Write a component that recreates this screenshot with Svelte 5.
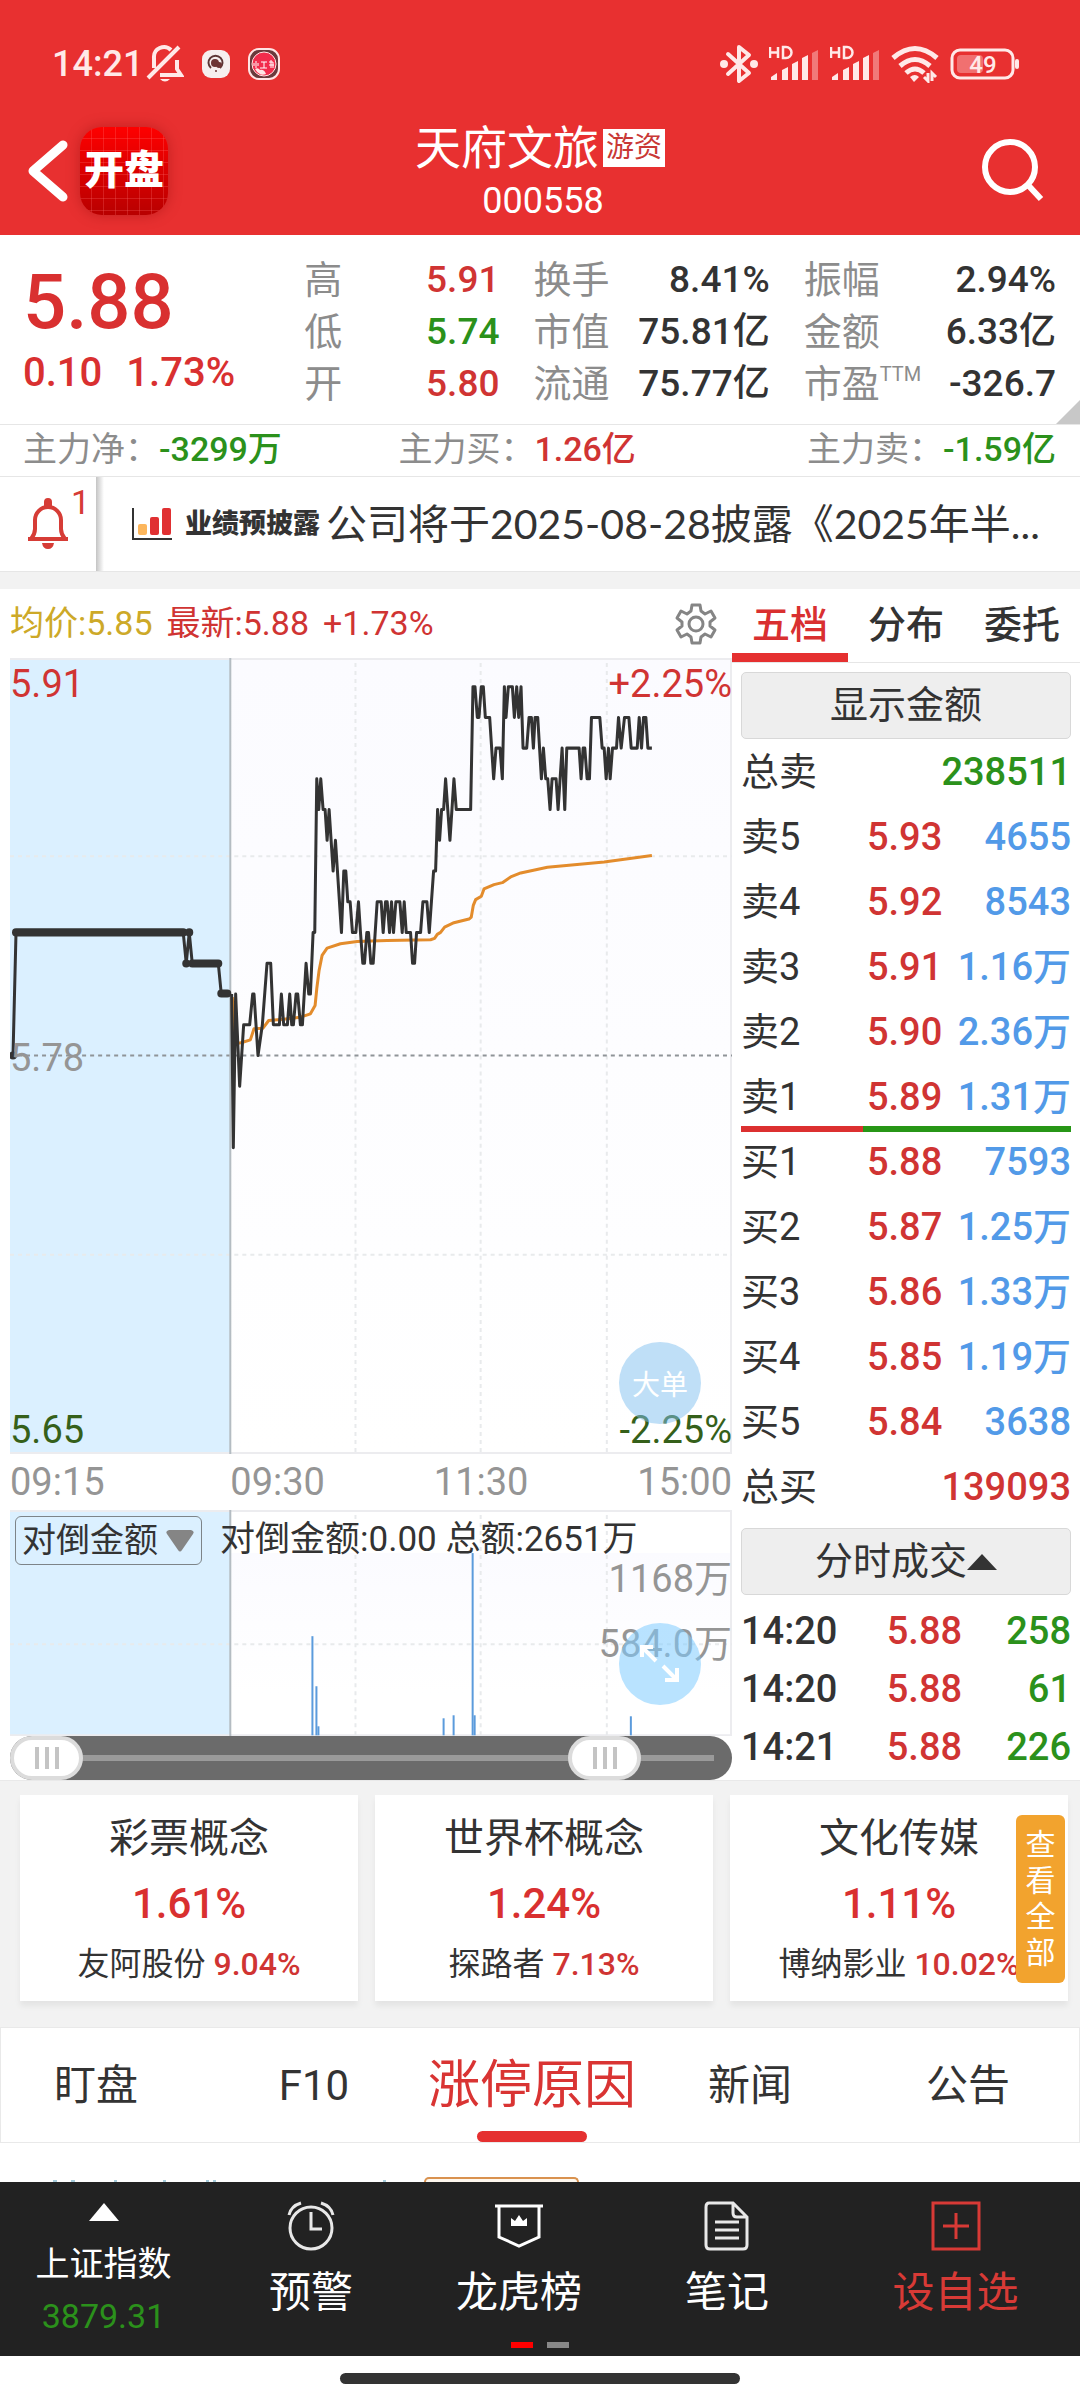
<script lang="ts">
  type Tone = "up" | "down" | "plain";

  const stats: { label: string; sup?: string; value: string; tone: Tone }[][] = [
    [
      { label: "高", value: "5.91", tone: "up" },
      { label: "低", value: "5.74", tone: "down" },
      { label: "开", value: "5.80", tone: "up" },
    ],
    [
      { label: "换手", value: "8.41%", tone: "plain" },
      { label: "市值", value: "75.81亿", tone: "plain" },
      { label: "流通", value: "75.77亿", tone: "plain" },
    ],
    [
      { label: "振幅", value: "2.94%", tone: "plain" },
      { label: "金额", value: "6.33亿", tone: "plain" },
      { label: "市盈", sup: "TTM", value: "-326.7", tone: "plain" },
    ],
  ];

  const funds: { label: string; value: string; tone: Tone }[] = [
    { label: "主力净：", value: "-3299万", tone: "down" },
    { label: "主力买：", value: "1.26亿", tone: "up" },
    { label: "主力卖：", value: "-1.59亿", tone: "down" },
  ];

  const totalSell = 238511;
  const totalBuy = 139093;
  const buyShare = (totalBuy / (totalBuy + totalSell)) * 100;

  const sells = [
    ["卖5", "5.93", "4655"],
    ["卖4", "5.92", "8543"],
    ["卖3", "5.91", "1.16万"],
    ["卖2", "5.90", "2.36万"],
    ["卖1", "5.89", "1.31万"],
  ];
  const buys = [
    ["买1", "5.88", "7593"],
    ["买2", "5.87", "1.25万"],
    ["买3", "5.86", "1.33万"],
    ["买4", "5.85", "1.19万"],
    ["买5", "5.84", "3638"],
  ];
  const ticks = [
    ["14:20", "5.88", "258"],
    ["14:20", "5.88", "61"],
    ["14:21", "5.88", "226"],
  ];

  const sectors = [
    { name: "彩票概念", change: "1.61%", stock: "友阿股份", stockChange: "9.04%" },
    { name: "世界杯概念", change: "1.24%", stock: "探路者", stockChange: "7.13%" },
    { name: "文化传媒", change: "1.11%", stock: "博纳影业", stockChange: "10.02%" },
  ];

  const bookTabs = ["五档", "分布", "委托"];
  const infoTabs = ["盯盘", "F10", "涨停原因", "新闻", "公告"];
  let bookTab = $state("五档");
  let infoTab = $state("涨停原因");
  let rangeStart = $state(0);
  let rangeEnd = $state(86);

  // call auction, [x, price in cents]
  const auction = [
    [3, 578], [6, 582], [173, 582], [176, 581], [179, 582], [182, 581],
    [208, 581], [211, 580], [217, 580],
  ];

  // continuous trading, [thirds of a pixel right of x = 210, price in cents]
  const trades = [
    [34, 580], [39, 575], [46, 580], [58, 577], [70, 579], [88, 579], [97, 580], [101, 580],
    [113, 578], [126, 579], [140, 581], [151, 581], [159, 579], [177, 579], [183, 580], [190, 579],
    [201, 579], [208, 580], [214, 579], [219, 579], [227, 580], [232, 580], [240, 579], [246, 579],
    [257, 581], [265, 580], [270, 580], [278, 582], [283, 582], [289, 587], [295, 586], [301, 587],
    [308, 586], [314, 586], [320, 585], [326, 586], [332, 585], [338, 584], [345, 585], [351, 584],
    [363, 582], [370, 584], [376, 584], [382, 583], [389, 583], [396, 582], [406, 582], [414, 583],
    [420, 582], [427, 581], [432, 581], [439, 582], [444, 582], [451, 581], [458, 581], [470, 583],
    [482, 583], [488, 582], [495, 583], [500, 583], [507, 582], [513, 583], [519, 582], [526, 583],
    [538, 583], [545, 582], [551, 583], [557, 582], [570, 582], [576, 581], [582, 581], [588, 582],
    [600, 582], [607, 583], [619, 583], [626, 582], [639, 584], [645, 584], [651, 586], [657, 585],
    [663, 586], [669, 586], [675, 587], [688, 585], [700, 587], [707, 586], [750, 586], [757, 590],
    [763, 590], [770, 589], [775, 589], [782, 590], [788, 590], [794, 589], [807, 589], [819, 587],
    [826, 588], [838, 588], [845, 587], [851, 590], [856, 589], [863, 590], [875, 590], [881, 589],
    [888, 590], [894, 589], [901, 590], [907, 588], [918, 588], [925, 589], [932, 589], [938, 588],
    [943, 589], [951, 589], [962, 587], [968, 588], [975, 587], [981, 587], [988, 586], [994, 587],
    [1006, 587], [1012, 586], [1024, 588], [1032, 586], [1038, 588], [1075, 588], [1081, 587],
    [1087, 588], [1092, 588], [1099, 587], [1106, 587], [1112, 589], [1137, 589], [1144, 588],
    [1150, 588], [1156, 587], [1163, 588], [1168, 587], [1175, 588], [1187, 588], [1193, 589],
    [1201, 588], [1211, 589], [1224, 589], [1231, 588], [1249, 588], [1255, 589], [1262, 588],
    [1268, 589], [1275, 589], [1281, 588], [1293, 588],
  ];

  const average = [
    [36, 1010], [44, 1150], [65, 1146], [90, 1138], [101, 1105], [128, 1103], [145, 1080],
    [190, 1076], [240, 1070], [270, 1060], [284, 1035], [289, 985], [296, 930], [305, 885],
    [320, 863], [360, 850], [410, 843], [500, 840], [630, 838], [642, 834], [650, 822], [660, 816],
    [672, 800], [700, 787], [745, 776], [752, 770], [758, 735], [765, 718], [782, 708], [790, 686],
    [820, 673], [845, 667], [870, 650], [900, 638], [980, 621], [1150, 605], [1293, 586],
  ];

  const priceY = (cents: number) => 397 - (cents - 578) * 30.7;
  const tradeX = (t: number) => 210 + t / 3;

  const auctionLine = auction.map(([x, p]) => `${x},${priceY(p)}`).join(" ");
  const tradeLine = trades.map(([t, p]) => `${tradeX(t)},${priceY(p)}`).join(" ");
  const averageLine = average.map(([t, y]) => `${tradeX(t)},${2 + y / 3}`).join(" ");

  // [x, top] of every bar in the lower plot
  const bars = [
    [302, 126], [306, 176], [308, 216], [433, 208], [443, 205], [462, 43], [464, 205], [620, 206],
  ];
</script>

{#snippet signal()}
  <svg width="50" height="38" viewBox="0 0 50 38" fill="#ffe9e8" aria-hidden="true">
    <path d="M1 2v11M1 7.500h8M9 2v11M14 2v11h3a5.500 5.500 0 0 0 0-11z" fill="none" stroke="#ffe9e8" stroke-width="2.500" />
    <path d="M2 35v-3l6-4v7zM13 35V25l6-3v13zM23 35V19l6-3v19zM33 35V13l6-3v25z" />
    <path d="M43 35V8l6-3v30z" opacity="0.4" />
  </svg>
{/snippet}

<div class="screen">
  <header>
    <div class="status">
      <span class="clock">14:21</span>
      <svg width="38" height="40" viewBox="0 0 38 40" fill="none" stroke="#ffe9e8" stroke-width="4" aria-hidden="true">
        <path d="M8 24V14a10 10 0 0 1 17-8M31 16v9l4 6H14M2 34 33 3" />
        <path d="M14 35q5 5 10 0z" fill="#ffe9e8" stroke="none" />
      </svg>
      <svg class="app" width="30" height="30" viewBox="0 0 30 30" aria-hidden="true">
        <rect x="1" y="1" width="28" height="28" rx="9" fill="#f6eeee" />
        <path d="M10 19a7 7 0 1 1 9 0" fill="none" stroke="#5d3535" stroke-width="2" />
        <circle cx="14" cy="14" r="4" fill="#6d3434" />
        <circle cx="18" cy="16" r="3" fill="#6d3434" />
        <circle cx="15" cy="22" r="1" fill="#6d3434" />
      </svg>
      <svg class="app" width="32" height="32" viewBox="0 0 32 32" aria-hidden="true">
        <rect x="1" y="1" width="30" height="30" rx="10" fill="#6a3a3c" stroke="#ffe5e5" stroke-width="2" />
        <circle cx="16" cy="16" r="12" fill="#f22c4c" stroke="#ffe5e5" stroke-width="1" />
        <path d="M8 13v7M6 15v3M10 15v3M13 14h6M16 14v6M12 20h7M21 14h4v6M23 12v8M21 17h5" stroke="#fff" stroke-width="1" fill="none" />
        <path d="M7 21q3-2 5 1 4-1 6 4-6 3-11-5z" fill="#ffe5e5" />
      </svg>
      <div class="radios">
        <svg width="38" height="42" viewBox="0 0 38 42" fill="none" stroke="#ffe9e8" stroke-width="4" aria-hidden="true">
          <path d="M8 11 29 30 19 38V4l10 8L8 31" stroke-linejoin="round" stroke-linecap="round" />
          <circle cx="4" cy="21" r="4" fill="#ffe9e8" stroke="none" />
          <circle cx="34" cy="21" r="4" fill="#ffe9e8" stroke="none" />
        </svg>
        {@render signal()}
        {@render signal()}
        <svg width="48" height="38" viewBox="0 0 48 38" fill="none" stroke="#ffe9e8" stroke-width="5" aria-hidden="true">
          <path d="M2 13q22-19 44 0M9 21q15-13 30 0M15 28q9-8 18 0" />
          <path d="m19 32q5-4 9 0l-5 5z" fill="#ffe9e8" stroke="none" />
          <path d="M37 28v8l-4-4M41 36v-8l4 4" stroke-width="3" />
        </svg>
        <svg width="70" height="34" viewBox="0 0 70 34" aria-hidden="true">
          <rect x="2" y="3" width="61" height="28" rx="8" fill="none" stroke="#ffe9e8" stroke-width="3" />
          <rect x="7" y="8" width="26" height="18" rx="4" fill="#f17070" />
          <rect x="65" y="12" width="4" height="10" rx="2" fill="#ffe9e8" />
          <text x="33" y="26" text-anchor="middle" class="charge">49</text>
        </svg>
      </div>
    </div>

    <nav class="title-bar">
      <div class="left">
        <button aria-label="返回">
          <svg width="40" height="62" viewBox="0 0 40 62" aria-hidden="true">
            <path d="M35 5 5 31l30 26" fill="none" stroke="#fff" stroke-width="9" stroke-linecap="round" stroke-linejoin="round" />
          </svg>
        </button>
        <span class="logo">开盘</span>
      </div>
      <div class="stock">
        <h1>天府文旅<span>游资</span></h1>
        <p>000558</p>
      </div>
      <button class="search" aria-label="搜索">
        <svg width="62" height="64" viewBox="0 0 62 64" fill="none" stroke="#fff" stroke-width="6" aria-hidden="true">
          <circle cx="28" cy="28" r="25" />
          <path d="m46 46 13 14" />
        </svg>
      </button>
    </nav>
  </header>

  <section class="quote">
    <div class="last">
      <strong>5.88</strong>
      <p><span>0.10</span><span>1.73%</span></p>
    </div>
    {#each stats as column}
      <dl>
        {#each column as stat}
          <div>
            <dt>{stat.label}{#if stat.sup}<sup>{stat.sup}</sup>{/if}</dt>
            <dd class={stat.tone}>{stat.value}</dd>
          </div>
        {/each}
      </dl>
    {/each}
  </section>

  <section class="funds">
    {#each funds as fund}
      <p>{fund.label}<b class={fund.tone}>{fund.value}</b></p>
    {/each}
  </section>

  <section class="notice">
    <button class="alerts" aria-label="提醒">
      <svg width="46" height="54" viewBox="0 0 46 54" fill="none" stroke="#d63c36" stroke-width="4" aria-hidden="true">
        <path d="M3 42h40M6 42q4-5 4-10v-9a13 13 0 0 1 26 0v9q0 5 4 10" />
        <path d="M19 10V5a4 4 0 0 1 8 0v5zM17 46h12q-1 6-6 6t-6-6z" fill="#d63c36" stroke="none" />
      </svg>
      <span>1</span>
    </button>
    <a href="#notice">
      <svg width="40" height="34" viewBox="0 0 40 34" aria-hidden="true">
        <path d="M1 1v31h39" fill="none" stroke="#333" stroke-width="2" />
        <rect x="6" y="17" width="9" height="11" rx="2" fill="#fcb65c" />
        <rect x="18" y="10" width="9" height="18" rx="2" fill="#e03032" />
        <rect x="30" y="1" width="9" height="27" rx="2" fill="#e03032" />
      </svg>
      <b>业绩预披露</b>
      <span>公司将于2025-08-28披露《2025年半...</span>
    </a>
  </section>

  <main>
    <section class="chart">
      <div class="legend">
        <span class="avg">均价:5.85</span>
        <span class="up">最新:5.88</span>
        <span class="up">+1.73%</span>
        <button aria-label="设置">
          <svg width="42" height="42" viewBox="0 0 42 42" fill="none" stroke="#858585" stroke-width="3" stroke-linejoin="round" aria-hidden="true">
            <path d="M17 2h8l1 6 4 3 6-3 4 7-5 4v4l5 4-4 7-6-3-4 3-1 6h-8l-1-6-4-3-6 3-4-7 5-4v-4l-5-4 4-7 6 3 4-3z" />
            <circle cx="21" cy="21" r="7" />
          </svg>
        </button>
      </div>

      <div class="plot">
        <svg viewBox="0 0 721 795" aria-hidden="true">
          <defs>
            <linearGradient id="fade" x2="0" y2="1">
              <stop offset="0" stop-color="#fbfbff" />
              <stop offset="1" stop-color="#ffffff" />
            </linearGradient>
          </defs>
          <rect width="721" height="795" fill="url(#fade)" />
          <rect width="220" height="795" fill="#dbf0ff" />
          <path d="M0 1h721M0 794h721M720 0v795" stroke="#ececef" stroke-width="2" />
          <path d="M345 5v790M470 5v790M596 5v790M0 198h721M0 596h721" class="grid" />
          <path d="M0 397h721" class="base" />
          <path d="M220 0v795" stroke="#b4bcc2" stroke-width="2" />
          <polyline points={averageLine} class="line average" />
          <polyline points={auctionLine} class="line" />
          <path d="M6 274h167M182 305h26M211 335h6M176 305h0M179 274h0M3 397h0" class="dots" />
          <polyline points={tradeLine} class="line" />
        </svg>
        <span class="mark top left up">5.91</span>
        <span class="mark top right up">+2.25%</span>
        <span class="mark middle left">5.78</span>
        <span class="mark bottom left low">5.65</span>
        <span class="mark bottom right low">-2.25%</span>
        <button class="bubble big-order">大单</button>
      </div>

      <div class="times">
        <span>09:15</span><span>09:30</span><span>11:30</span><span>15:00</span>
      </div>

      <div class="plot">
        <svg viewBox="0 0 721 226" aria-hidden="true">
          <rect width="721" height="226" fill="#fff" />
          <rect y="43" width="721" height="140" fill="url(#fade)" />
          <rect width="220" height="226" fill="#dbf0ff" />
          <path d="M0 1h721M0 225h721M720 0v226" stroke="#ececef" stroke-width="2" />
          <path d="M345 5v221M470 5v221M596 5v221M0 134h721" class="grid" />
          <path d="M220 0v226" stroke="#b4bcc2" stroke-width="2" />
          {#each bars as [x, top]}
            <path d="M{x} {top}V225" stroke="#5b9bdc" stroke-width="2" />
          {/each}
        </svg>
        <div class="indicator">
          <label>
            <select aria-label="指标">
              <option>对倒金额</option>
            </select>
            <svg width="28" height="22" viewBox="0 0 28 22" fill="#858585" aria-hidden="true">
              <path d="M3 0h22q4 1 2 4L16 20q-2 3-4 0L1 4q-2-3 2-4z" />
            </svg>
          </label>
          <span>对倒金额:0.00 总额:2651万</span>
        </div>
        <span class="mark right volume-high">1168万</span>
        <span class="mark right volume-half">584.0万</span>
        <button class="bubble expand" aria-label="放大">
          <svg width="42" height="42" viewBox="0 0 42 42" fill="none" stroke="#fff" stroke-width="4" aria-hidden="true">
            <path d="M3 14V4h11M4 5l13 13M24 23l13 13M38 25v12H26" />
          </svg>
        </button>
      </div>

      <div class="range">
        <input type="range" aria-label="开始时间" bind:value={rangeStart} />
        <input type="range" aria-label="结束时间" bind:value={rangeEnd} />
      </div>
    </section>

    <section class="book">
      <div class="book-tabs" role="tablist">
        {#each bookTabs as tab}
          <button role="tab" aria-selected={tab === bookTab} onclick={() => (bookTab = tab)}>{tab}</button>
        {/each}
      </div>
      <div class="book-body">
        <button class="bar">显示金额</button>
        <table>
          <colgroup><col class="name" /><col class="price" /><col /></colgroup>
          <tbody>
            <tr><th scope="row">总卖</th><td class="down" colspan="2">{totalSell}</td></tr>
            {#each sells as [label, price, volume]}
              <tr><th scope="row">{label}</th><td class="up">{price}</td><td class="volume">{volume}</td></tr>
            {/each}
          </tbody>
        </table>
        <div class="balance"><i style="width: {buyShare}%"></i></div>
        <table>
          <colgroup><col class="name" /><col class="price" /><col /></colgroup>
          <tbody>
            {#each buys as [label, price, volume]}
              <tr><th scope="row">{label}</th><td class="up">{price}</td><td class="volume">{volume}</td></tr>
            {/each}
            <tr><th scope="row">总买</th><td class="up" colspan="2">{totalBuy}</td></tr>
          </tbody>
        </table>
        <button class="bar deals">
          分时成交<svg width="30" height="16" viewBox="0 0 30 16" aria-hidden="true"><path d="M15 0l15 16H0z" fill="#333" /></svg>
        </button>
        <table class="ticks">
          <tbody>
            {#each ticks as [time, price, volume]}
              <tr><td>{time}</td><td class="up">{price}</td><td class="down">{volume}</td></tr>
            {/each}
          </tbody>
        </table>
      </div>
    </section>
  </main>

  <section class="sectors">
    {#each sectors as sector}
      <article>
        <h2>{sector.name}</h2>
        <strong>{sector.change}</strong>
        <p>{sector.stock} <b>{sector.stockChange}</b></p>
      </article>
    {/each}
    <button>查看全部</button>
  </section>

  <div class="info-tabs">
    <div role="tablist">
      {#each infoTabs as tab}
        <button role="tab" aria-selected={tab === infoTab} onclick={() => (infoTab = tab)}>{tab}</button>
      {/each}
    </div>
  </div>

  <div class="peek">
    <svg width="340" height="2" viewBox="0 0 340 2" aria-hidden="true">
      <path d="M0 1h4M18 1h4M61 1h3M110 1h3M153 1h3M160 1h3M330 1h3" stroke="#a5cbda" stroke-width="2" />
    </svg>
    <i></i>
  </div>

  <footer>
    <nav>
      <a class="index" href="#index">
        <svg width="30" height="18" viewBox="0 0 30 18" aria-hidden="true"><path d="M15 0l15 18H0z" fill="#fff" /></svg>
        <span>上证指数</span>
        <small>3879.31</small>
      </a>
      <a href="#alarm">
        <svg width="50" height="50" viewBox="0 0 50 50" fill="none" stroke="#e8e8e8" stroke-width="3" aria-hidden="true">
          <circle cx="25" cy="27" r="21" />
          <path d="M25 11v17h11M3 14q2-9 12-12M47 14Q45 5 35 2" />
        </svg>
        <span>预警</span>
      </a>
      <a href="#billboard">
        <svg width="50" height="50" viewBox="0 0 50 50" fill="none" stroke="#fff" stroke-width="3" aria-hidden="true">
          <path d="M1 5h48M5 5v31l20 9 20-9V5" />
          <path d="M17 25v-8l4 3 4-6 4 6 4-3v8z" fill="#fff" stroke="none" />
        </svg>
        <span>龙虎榜</span>
      </a>
      <a href="#notes">
        <svg width="50" height="50" viewBox="0 0 50 50" fill="none" stroke="#e8e8e8" stroke-width="3" aria-hidden="true">
          <path d="M7 2h24l14 14v28q0 4-4 4H8q-4 0-4-4V6q0-4 3-4zM31 2v10q0 4 4 4h10M13 21h24M13 29h24M13 37h24" />
        </svg>
        <span>笔记</span>
      </a>
      <a class="add" href="#add">
        <svg width="50" height="50" viewBox="0 0 50 50" fill="none" stroke="#d83a36" stroke-width="3" aria-hidden="true">
          <path d="M2 2h46v46H2zM25 12v26M12 25h26" />
        </svg>
        <span>设自选</span>
      </a>
    </nav>
    <div class="pages"><i class="current"></i><i></i></div>
  </footer>
  <div class="home"><i></i></div>
</div>

<style>
  :global(body) {
    background: #fff;
  }

  .screen {
    font-family: Roboto, "Noto Sans CJK SC", sans-serif;
    color: #333;
  }

  h1, h2, p, dl, dd {
    margin: 0;
    font-weight: 400;
  }

  button {
    margin: 0;
    padding: 0;
    border: 0;
    background: none;
    color: inherit;
    font: inherit;
  }

  a {
    color: inherit;
    text-decoration: none;
  }

  svg {
    display: block;
    flex: none;
  }

  .up {
    color: #d03433;
  }

  .down {
    color: #2b911b;
  }

  header {
    background: #e83030;
    color: #fff;
  }

  .status {
    display: flex;
    align-items: center;
    padding: 40px 60px 0 52px;
    line-height: 48px;
  }

  .clock {
    margin-right: 3px;
    font-size: 36px;
    font-weight: 500;
    color: #ffe9e8;
  }

  .app {
    margin-left: 17px;
  }

  .radios {
    display: flex;
    align-items: center;
    gap: 11px;
    margin-left: auto;
  }

  .charge {
    font-size: 24px;
    font-weight: 500;
    fill: #ffe9e8;
  }

  .title-bar {
    display: grid;
    grid-template-columns: 1fr auto 1fr;
    align-items: center;
    padding: 27px 28px 8px;
  }

  .left {
    display: flex;
    align-items: center;
    gap: 12px;
  }

  .logo {
    width: 88px;
    border-radius: 22px;
    background:
      repeating-linear-gradient(90deg, transparent 0 11px, rgba(255, 120, 120, 0.25) 11px 12px),
      repeating-linear-gradient(transparent 0 11px, rgba(255, 120, 120, 0.25) 11px 12px),
      linear-gradient(#fe0000, #b80000);
    box-shadow: 0 0 14px rgba(120, 0, 0, 0.35);
    font-size: 40px;
    font-weight: 900;
    line-height: 88px;
    text-align: center;
  }

  .stock {
    padding-top: 6px;
    text-align: center;
  }

  h1 {
    display: flex;
    align-items: center;
    gap: 4px;
    font-size: 46px;
    line-height: 54px;
  }

  h1 span {
    padding: 0 3px;
    background: #fff;
    color: #c93835;
    font-size: 28px;
    line-height: 38px;
  }

  .stock p {
    padding-left: 6px;
    font-size: 36px;
    line-height: 52px;
  }

  .search {
    justify-self: end;
    margin-right: 8px;
  }

  .quote {
    position: relative;
    display: grid;
    grid-template-columns: 247fr 195fr 236fr 252fr;
    column-gap: 34px;
    align-items: center;
    padding: 19px 24px 14px 23px;
    border-bottom: 1px solid #e6e6e6;
  }

  .quote::after {
    content: "";
    position: absolute;
    right: 0;
    bottom: 0;
    border: 12px solid #c8c8c8;
    border-top-color: transparent;
    border-left-color: transparent;
  }

  .last {
    color: #d93030;
    font-weight: 500;
  }

  .last strong {
    display: block;
    font-size: 76px;
    font-weight: 500;
    line-height: 82px;
  }

  .last p {
    display: flex;
    gap: 24px;
    font-size: 40px;
    font-weight: 500;
    line-height: 60px;
  }

  dl div {
    display: flex;
    justify-content: space-between;
    line-height: 52px;
    white-space: nowrap;
  }

  dt {
    display: flex;
    color: #8c8c8c;
    font-size: 38px;
  }

  sup {
    font-size: 20px;
    line-height: 32px;
  }

  dd {
    font-size: 37px;
    font-weight: 500;
  }

  .funds {
    display: grid;
    grid-template-columns: 374fr 407fr auto;
    padding: 0 24px 2px 23px;
    border-bottom: 1px solid #e6e6e6;
    color: #8c8c8c;
    font-size: 34px;
    line-height: 49px;
    white-space: nowrap;
  }

  .funds b {
    font-weight: 500;
  }

  .notice {
    display: flex;
    border-bottom: 1px solid #e6e6e6;
  }

  .alerts {
    display: flex;
    flex: none;
    align-items: center;
    width: 96px;
    padding-left: 25px;
    color: #d63c36;
    font-size: 34px;
    line-height: 50px;
  }

  .alerts span {
    align-self: flex-start;
  }

  .notice a {
    display: flex;
    flex: 1;
    align-items: center;
    min-width: 0;
    padding-left: 36px;
    background: linear-gradient(90deg, #c4c4c4, #fff 8px);
    font-size: 41px;
    line-height: 94px;
    white-space: nowrap;
  }

  .notice b {
    margin: 0 6px 0 13px;
    font-size: 27px;
    font-weight: 900;
  }

  .notice a span {
    flex: 1;
    min-width: 0;
    overflow: hidden;
    font-family: Lato, "Noto Sans CJK SC", sans-serif;
  }

  main {
    display: grid;
    grid-template-columns: minmax(0, 732fr) minmax(0, 348fr);
    border-top: 17px solid #f2f2f2;
  }

  .chart {
    padding-left: 10px;
  }

  .legend {
    display: flex;
    align-items: center;
    gap: 14px;
    padding-right: 15px;
    font-size: 34px;
    line-height: 69px;
    white-space: nowrap;
  }

  .avg {
    color: #cda928;
  }

  .legend button {
    margin-left: auto;
  }

  .plot {
    position: relative;
  }

  .plot > svg {
    width: 100%;
    height: auto;
  }

  .grid {
    stroke: #e8eaec;
    stroke-width: 2;
    stroke-dasharray: 4 4;
  }

  .base {
    stroke: #8f9498;
    stroke-width: 2;
    stroke-dasharray: 4 4;
  }

  .line {
    fill: none;
    stroke: #333;
    stroke-width: 3;
    stroke-linejoin: round;
  }

  .average {
    stroke: #e38c2c;
  }

  .dots {
    stroke: #333;
    stroke-width: 8;
    stroke-linecap: round;
  }

  .mark {
    position: absolute;
    color: #959595;
    font-size: 38px;
    line-height: 48px;
  }

  .mark.up {
    color: #d03433;
  }

  .mark.low {
    color: #35601a;
  }

  .top {
    top: 2px;
  }

  .middle {
    top: 50%;
    margin-top: -22px;
  }

  .bottom {
    bottom: 0;
  }

  .mark.left {
    left: 0;
  }

  .mark.right {
    right: 0;
  }

  .volume-high {
    top: 45px;
  }

  .volume-half {
    top: 110px;
  }

  .bubble {
    position: absolute;
    right: 31px;
    display: grid;
    place-items: center;
    width: 82px;
    height: 82px;
    border-radius: 50%;
    color: #fff;
    font-size: 28px;
  }

  .big-order {
    bottom: 30px;
    background: rgba(128, 192, 240, 0.5);
  }

  .expand {
    top: 113px;
    background: rgba(128, 204, 255, 0.55);
  }

  .times {
    display: grid;
    grid-template-columns: 220fr 125fr 251fr 125fr;
    padding-top: 1px;
    color: #959595;
    font-size: 38px;
    line-height: 55px;
  }

  .times span:nth-child(3) {
    text-align: center;
  }

  .times span:last-child {
    justify-self: end;
  }

  .indicator {
    position: absolute;
    top: 6px;
    left: 5px;
    display: flex;
    gap: 18px;
    font-size: 35px;
    line-height: 47px;
    white-space: nowrap;
  }

  .indicator label {
    display: flex;
    align-items: center;
    gap: 8px;
    padding: 0 7px 0 6px;
    border: 1px solid #7d8488;
    border-radius: 6px;
    font-size: 34px;
  }

  select {
    padding: 0;
    border: 0;
    appearance: none;
    background: none;
    color: inherit;
    font: inherit;
  }

  .range {
    display: grid;
    border-radius: 22px;
    background: linear-gradient(#9a9a9a, #9a9a9a) center / calc(100% - 36px) 6px no-repeat #6b6b6b;
  }

  .range input {
    grid-area: 1 / 1;
    width: 100%;
    height: 44px;
    margin: 0;
    appearance: none;
    background: none;
    pointer-events: none;
  }

  .range input::-webkit-slider-thumb {
    appearance: none;
    box-sizing: border-box;
    width: 73px;
    height: 44px;
    border: 4px solid #dcdcdc;
    border-radius: 22px;
    background:
      linear-gradient(90deg, #c4c4c4 4px, transparent 4px 10px, #c4c4c4 10px 14px, transparent 14px 20px, #c4c4c4 20px)
      center / 24px 22px no-repeat #fff;
    pointer-events: auto;
  }

  .book-tabs {
    display: grid;
    grid-template-columns: repeat(3, 1fr);
    border-bottom: 1px solid #e6e6e6;
  }

  .book-tabs button {
    font-size: 38px;
    font-weight: 500;
    line-height: 73px;
  }

  .book-tabs button[aria-selected="true"] {
    box-shadow: inset 0 -9px #e53030;
    color: #d93030;
  }

  .book-body {
    padding: 9px 9px 1px;
  }

  .bar {
    display: flex;
    align-items: center;
    justify-content: center;
    width: 100%;
    border: 1px solid #d8d8d8;
    border-radius: 5px;
    background: #eee;
    font-size: 38px;
    line-height: 65px;
  }

  .deals {
    margin: 9px 0 6px;
  }

  table {
    width: 100%;
    border-collapse: collapse;
    table-layout: fixed;
    font-size: 38px;
    line-height: 63px;
    white-space: nowrap;
  }

  .name {
    width: 30%;
  }

  .price {
    width: 31%;
  }

  th {
    padding: 2px 0 0;
    font-weight: 400;
    text-align: left;
  }

  td {
    padding: 2px 0 0;
    font-weight: 500;
    text-align: right;
  }

  .volume {
    color: #529ae8;
  }

  .balance {
    position: relative;
    height: 6px;
    margin: -3px 0;
    background: #279616;
  }

  .balance i {
    display: block;
    height: 100%;
    background: #dc3030;
  }

  .ticks {
    line-height: 56px;
  }

  .ticks td:first-child {
    width: 34%;
    text-align: left;
  }

  .sectors {
    position: relative;
    display: grid;
    grid-template-columns: repeat(3, minmax(0, 1fr));
    gap: 17px;
    padding: 14px 12px 26px 20px;
    border-top: 1px solid #e9e9e9;
    background: #f2f2f2;
  }

  article {
    padding: 16px 0 14px;
    background: #fff;
    box-shadow: 0 5px 6px rgba(0, 0, 0, 0.06);
    text-align: center;
    white-space: nowrap;
  }

  h2 {
    font-size: 40px;
    line-height: 56px;
  }

  article strong {
    display: block;
    color: #d93030;
    font-size: 42px;
    font-weight: 500;
    line-height: 74px;
  }

  article p {
    font-size: 32px;
    line-height: 46px;
  }

  article b {
    color: #d03433;
    font-weight: 500;
  }

  .sectors button {
    position: absolute;
    top: 34px;
    right: 15px;
    width: 49px;
    padding: 12px 9px;
    border-radius: 6px;
    background: #f2a32e;
    color: #fff;
    font-size: 30px;
    line-height: 36px;
    word-break: break-all;
  }

  .info-tabs {
    border: 1px solid #e9e9e9;
  }

  .info-tabs div {
    display: grid;
    grid-template-columns: repeat(5, minmax(0, 1fr));
    margin: 0 2px 0 -14px;
  }

  .info-tabs button {
    display: grid;
    justify-items: center;
    padding-top: 7px;
    font-size: 42px;
    line-height: 102px;
    white-space: nowrap;
  }

  .info-tabs button::after {
    content: "";
    width: 110px;
    height: 11px;
    margin-top: -6px;
    border-radius: 6px;
  }

  .info-tabs button[aria-selected="true"] {
    color: #d93433;
    font-size: 52px;
  }

  .info-tabs button[aria-selected="true"]::after {
    background: #e53030;
  }

  .peek {
    display: flex;
    align-items: flex-end;
    gap: 31px;
    padding: 34px 0 0 53px;
  }

  .peek i {
    width: 151px;
    height: 3px;
    border: 2px solid #d9924f;
    border-bottom: 0;
    border-radius: 6px 6px 0 0;
    background: #fff8ee;
  }

  footer {
    background: #222;
    color: #fff;
  }

  footer nav {
    display: grid;
    grid-template-columns: 207fr 208fr 208fr 208fr 249fr;
    padding-top: 19px;
  }

  footer a {
    display: grid;
    justify-items: center;
    align-content: start;
    gap: 12px;
    font-size: 42px;
    line-height: 60px;
  }

  footer .index {
    gap: 0;
    padding-top: 2px;
    font-size: 34px;
    line-height: 52px;
  }

  .index span {
    margin-top: 17px;
  }

  .index small {
    color: #2b911b;
    font-size: 34px;
  }

  .add {
    color: #d83a36;
  }

  .pages {
    display: flex;
    justify-content: center;
    gap: 14px;
    padding-bottom: 8px;
  }

  .pages i {
    width: 22px;
    height: 6px;
    background: #888;
  }

  .pages .current {
    background: #f00;
  }

  .home {
    display: grid;
    justify-content: center;
    grid-template-columns: 37%;
    padding: 17px 0 15px;
  }

  .home i {
    height: 11px;
    border-radius: 6px;
    background: #333;
  }
</style>
